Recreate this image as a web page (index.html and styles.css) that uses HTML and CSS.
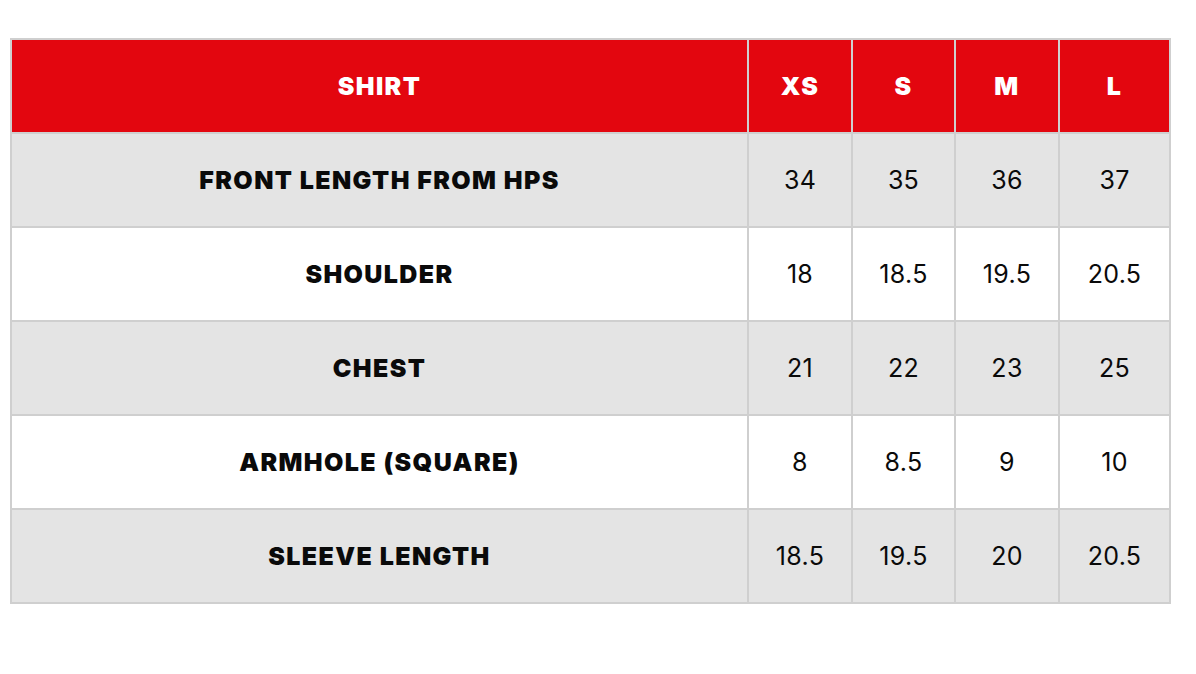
FILE: index.html
```html
<!DOCTYPE html>
<html>
<head>
<meta charset="utf-8">
<link rel="stylesheet" href="styles.css">
</head>
<body>
<table class="size-table">
  <colgroup>
    <col class="col-label">
    <col class="col-xs">
    <col class="col-s">
    <col class="col-m">
    <col class="col-l">
  </colgroup>
  <thead>
    <tr class="head-row">
      <th>SHIRT</th><th>XS</th><th>S</th><th>M</th><th>L</th>
    </tr>
  </thead>
  <tbody>
    <tr class="row-gray"><th>FRONT LENGTH FROM HPS</th><td>34</td><td>35</td><td>36</td><td>37</td></tr>
    <tr class="row-white"><th>SHOULDER</th><td>18</td><td>18.5</td><td>19.5</td><td>20.5</td></tr>
    <tr class="row-gray"><th>CHEST</th><td>21</td><td>22</td><td>23</td><td>25</td></tr>
    <tr class="row-white"><th>ARMHOLE (SQUARE)</th><td>8</td><td>8.5</td><td>9</td><td>10</td></tr>
    <tr class="row-gray"><th>SLEEVE LENGTH</th><td>18.5</td><td>19.5</td><td>20</td><td>20.5</td></tr>
  </tbody>
</table>
</body>
</html>
```
FILE: styles.css
```css
html, body {
  margin: 0;
  padding: 0;
  background: #ffffff;
}
body {
  padding: 38px 0 0 10px;
  font-family: "Inter", "Noto Sans", sans-serif;
}
.size-table {
  border-collapse: collapse;
  table-layout: fixed;
  width: 1160px;
}
.col-label { width: 737px; }
.col-xs { width: 104px; }
.col-s { width: 103px; }
.col-m { width: 104px; }
.col-l { width: 111px; }
.size-table th,
.size-table td {
  border: 2px solid #cfcfcf;
  height: 92px;
  padding: 0;
  text-align: center;
  vertical-align: middle;
  color: #0a0a0a;
}
.size-table th {
  font-weight: 900;
  font-size: 25px;
  letter-spacing: 1.4px;
}
.size-table td {
  font-weight: 400;
  font-size: 25px;
  letter-spacing: 0.3px;
}
.head-row th {
  background: #e3060f;
  color: #ffffff;
}
.row-gray th, .row-gray td { background: #e4e4e4; }
.row-white th, .row-white td { background: #ffffff; }
```
